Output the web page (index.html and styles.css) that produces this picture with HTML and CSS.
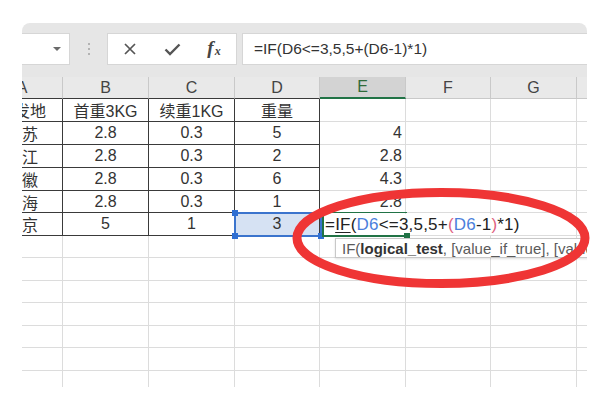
FILE: index.html
```html
<!DOCTYPE html>
<html lang="zh-CN">
<head>
<meta charset="utf-8">
<title>IF 公式</title>
<link rel="stylesheet" href="styles.css">
</head>
<body>
<div class="window">
  <div class="toolbar">
    <div class="namebox"><span class="caret"></span></div>
    <div class="grip"><i></i><i></i><i></i></div>
    <div class="fnbox">
      <span class="tool"><svg width="12" height="12" viewBox="0 0 12 12"><path d="M1 1L11 11M11 1L1 11" stroke="#555" stroke-width="1.7" fill="none"/></svg></span>
      <span class="tool"><svg width="17" height="13" viewBox="0 0 17 13"><path d="M1.5 6.5L6 11L15.5 1.5" stroke="#555" stroke-width="2.4" fill="none"/></svg></span>
      <span class="tool fx"><i>f</i><sub>x</sub></span>
    </div>
    <div class="formula">=IF(D6&lt;=3,5,5+(D6-1)*1)</div>
  </div>

  <div class="sheet">
    <div class="h ht">A</div><div class="h ht">B</div><div class="h ht">C</div><div class="h ht">D</div><div class="h on">E</div><div class="h">F</div><div class="h">G</div><div class="h"></div>

    <div class="c t">始发地</div><div class="c t">首重3KG</div><div class="c t">续重1KG</div><div class="c t">重量</div><div class="c n"></div><div class="c"></div><div class="c"></div><div class="c"></div>
    <div class="c t">江苏</div><div class="c t">2.8</div><div class="c t">0.3</div><div class="c t">5</div><div class="c n">4</div><div class="c"></div><div class="c"></div><div class="c"></div>
    <div class="c t">浙江</div><div class="c t">2.8</div><div class="c t">0.3</div><div class="c t">2</div><div class="c n">2.8</div><div class="c"></div><div class="c"></div><div class="c"></div>
    <div class="c t">安徽</div><div class="c t">2.8</div><div class="c t">0.3</div><div class="c t">6</div><div class="c n">4.3</div><div class="c"></div><div class="c"></div><div class="c"></div>
    <div class="c t">上海</div><div class="c t">2.8</div><div class="c t">0.3</div><div class="c t">1</div><div class="c n">2.8</div><div class="c"></div><div class="c"></div><div class="c"></div>
    <div class="c t">北京</div><div class="c t">5</div><div class="c t">1</div><div class="c t sel">3</div><div class="c n"></div><div class="c"></div><div class="c"></div><div class="c"></div>

    <div class="c"></div><div class="c"></div><div class="c"></div><div class="c"></div><div class="c"></div><div class="c"></div><div class="c"></div><div class="c"></div>
    <div class="c"></div><div class="c"></div><div class="c"></div><div class="c"></div><div class="c"></div><div class="c"></div><div class="c"></div><div class="c"></div>
    <div class="c"></div><div class="c"></div><div class="c"></div><div class="c"></div><div class="c"></div><div class="c"></div><div class="c"></div><div class="c"></div>
    <div class="c"></div><div class="c"></div><div class="c"></div><div class="c"></div><div class="c"></div><div class="c"></div><div class="c"></div><div class="c"></div>
    <div class="c"></div><div class="c"></div><div class="c"></div><div class="c"></div><div class="c"></div><div class="c"></div><div class="c"></div><div class="c"></div>
    <div class="c"></div><div class="c"></div><div class="c"></div><div class="c"></div><div class="c"></div><div class="c"></div><div class="c"></div><div class="c"></div>
    <div class="c"></div><div class="c"></div><div class="c"></div><div class="c"></div><div class="c"></div><div class="c"></div><div class="c"></div><div class="c"></div>

    <div class="selection">
      <span class="hd tl"></span><span class="hd tr"></span><span class="hd bl"></span><span class="hd br"></span>
    </div>
    <div class="edit-text">=<u>IF</u>(<span class="ref">D6</span>&lt;=3,5,5+<span class="par">(</span><span class="ref">D6</span>-1<span class="par">)</span>*1)</div>
    <div class="editor"><span class="ghd"></span></div>
    <div class="tip">IF(<b>logical_test</b>, [value_if_true], [value_if_false])</div>
  </div>
</div>

<svg class="annot" width="600" height="403" viewBox="0 0 600 403">
  <ellipse cx="441" cy="238" rx="144" ry="45.5" fill="none" stroke="#ef3535" stroke-width="9"/>
</svg>
</body>
</html>
```

FILE: styles.css
```css
html, body {
  margin: 0;
}
body {
  width: 600px;
  height: 403px;
  padding: 23px 0 0 22px;
  box-sizing: border-box;
  overflow: hidden;
  background: #ffffff;
  font-family: "Liberation Sans", "Noto Sans CJK SC", sans-serif;
  color: #333;
}

.window {
  width: 565px;
  height: 364px;
  border-radius: 8px 8px 0 0;
  overflow: hidden;
  background: #ffffff;
}

/* ---------- toolbar ---------- */
.toolbar {
  height: 54px;
  box-sizing: border-box;
  padding-top: 10px;
  background: #e6e6e6;
  display: flex;
  align-items: flex-start;
}
.namebox {
  width: 48px;
  height: 32px;
  box-sizing: border-box;
  background: #fff;
  border: 1px solid #d6d6d6;
  border-left: none;
  display: flex;
  align-items: center;
  justify-content: flex-end;
  padding-right: 8px;
}
.caret {
  width: 0;
  height: 0;
  border-left: 4px solid transparent;
  border-right: 4px solid transparent;
  border-top: 4px solid #6a6a6a;
}
.grip {
  width: 37px;
  height: 32px;
  display: flex;
  flex-direction: column;
  align-items: center;
  justify-content: center;
  gap: 3px;
}
.grip i {
  width: 2px;
  height: 2px;
  background: #b3b3b3;
}
.fnbox {
  width: 130px;
  height: 32px;
  box-sizing: border-box;
  background: #fff;
  border: 1px solid #d6d6d6;
  display: flex;
  align-items: center;
  padding-left: 1px;
}
.tool {
  width: 42px;
  height: 30px;
  display: flex;
  align-items: center;
  justify-content: center;
}
.fx {
  font-family: "Liberation Serif", serif;
  color: #444;
  font-size: 19px;
  align-items: baseline;
  padding-top: 3px;
  box-sizing: border-box;
}
.fx i {
  font-style: italic;
  font-weight: bold;
}
.fx sub {
  font-style: italic;
  font-weight: bold;
  font-size: 12px;
  vertical-align: baseline;
  position: relative;
  top: 1px;
  margin-left: 1px;
}
.formula {
  flex: 1;
  margin-left: 5px;
  height: 32px;
  box-sizing: border-box;
  background: #fff;
  border: 1px solid #d6d6d6;
  border-right: none;
  padding-left: 11px;
  display: flex;
  align-items: center;
  font-size: 15.5px;
  color: #333;
  white-space: nowrap;
}

/* ---------- sheet ---------- */
.sheet {
  position: relative;
  margin-left: -40px;
  width: max-content;
  display: grid;
  grid-template-columns: 81px 86px 86px 85px 86px 85px 86px 86px;
  grid-template-rows: 22px 23px 23px 23px 23px 22px 23px 22px 23px 22px 23px 22px 23px 22px;
}
.h, .c {
  box-sizing: border-box;
  display: flex;
  align-items: center;
  justify-content: center;
  white-space: nowrap;
  overflow: hidden;
  font-size: 16px;
}
.h {
  background: #e9e9e9;
  color: #444;
  border-right: 1px solid #c9c9c9;
  border-bottom: 1px solid #c9c9c9;
}
.h.ht {
  border-bottom-color: #3a3a3a;
}
.h.on {
  background: #d3d3d3;
  color: #2f6b3a;
  border-bottom: 2px solid #217346;
}
.c {
  color: #333;
  border-right: 1px solid #dcdcdc;
  border-bottom: 1px solid #dcdcdc;
}
.c.t {
  border-right-color: #3a3a3a;
  border-bottom-color: #3a3a3a;
}
.c.n {
  justify-content: flex-end;
  padding-right: 3px;
}
.c.sel {
  background: #d6e2f3;
}

/* overlays */
.selection {
  position: absolute;
  left: 252px;
  top: 135px;
  width: 88px;
  height: 25px;
  box-sizing: border-box;
  border: 2px solid #3b74cd;
}
.hd {
  position: absolute;
  width: 6px;
  height: 6px;
  background: #2f6fd2;
}
.hd.tl { left: -4px; top: -4px; }
.hd.tr { right: -4px; top: -4px; }
.hd.bl { left: -4px; bottom: -4px; }
.hd.br { right: -4px; bottom: -4px; }

.edit-text {
  position: absolute;
  left: 341px;
  top: 137px;
  height: 21px;
  padding: 0 6px 0 2px;
  background: #fff;
  display: flex;
  align-items: center;
  font-size: 17px;
  letter-spacing: 0.2px;
  color: #222;
  white-space: nowrap;
}
.edit-text u {
  text-decoration: underline;
  text-underline-offset: 2px;
}
.ref { color: #4b7fdc; }
.par { color: #e0607f; }

.editor {
  position: absolute;
  left: 340px;
  top: 135px;
  width: 85px;
  height: 25px;
  box-sizing: border-box;
  border: 2px solid #217346;
  border-right: none;
  border-top-width: 1px;
}
.ghd {
  position: absolute;
  right: -3px;
  bottom: -4px;
  width: 6px;
  height: 6px;
  background: #217346;
}

.tip {
  position: absolute;
  left: 353px;
  top: 161px;
  height: 20px;
  width: 320px;
  box-sizing: border-box;
  background: #fff;
  border: 1px solid #c8c8c8;
  box-shadow: 0 1px 2px rgba(0,0,0,0.12);
  padding-left: 6px;
  display: flex;
  align-items: center;
  font-size: 15px;
  color: #5a5a5a;
  white-space: nowrap;
}
.tip b {
  color: #333;
}

.annot {
  position: absolute;
  left: 0;
  top: 0;
  pointer-events: none;
}
```
